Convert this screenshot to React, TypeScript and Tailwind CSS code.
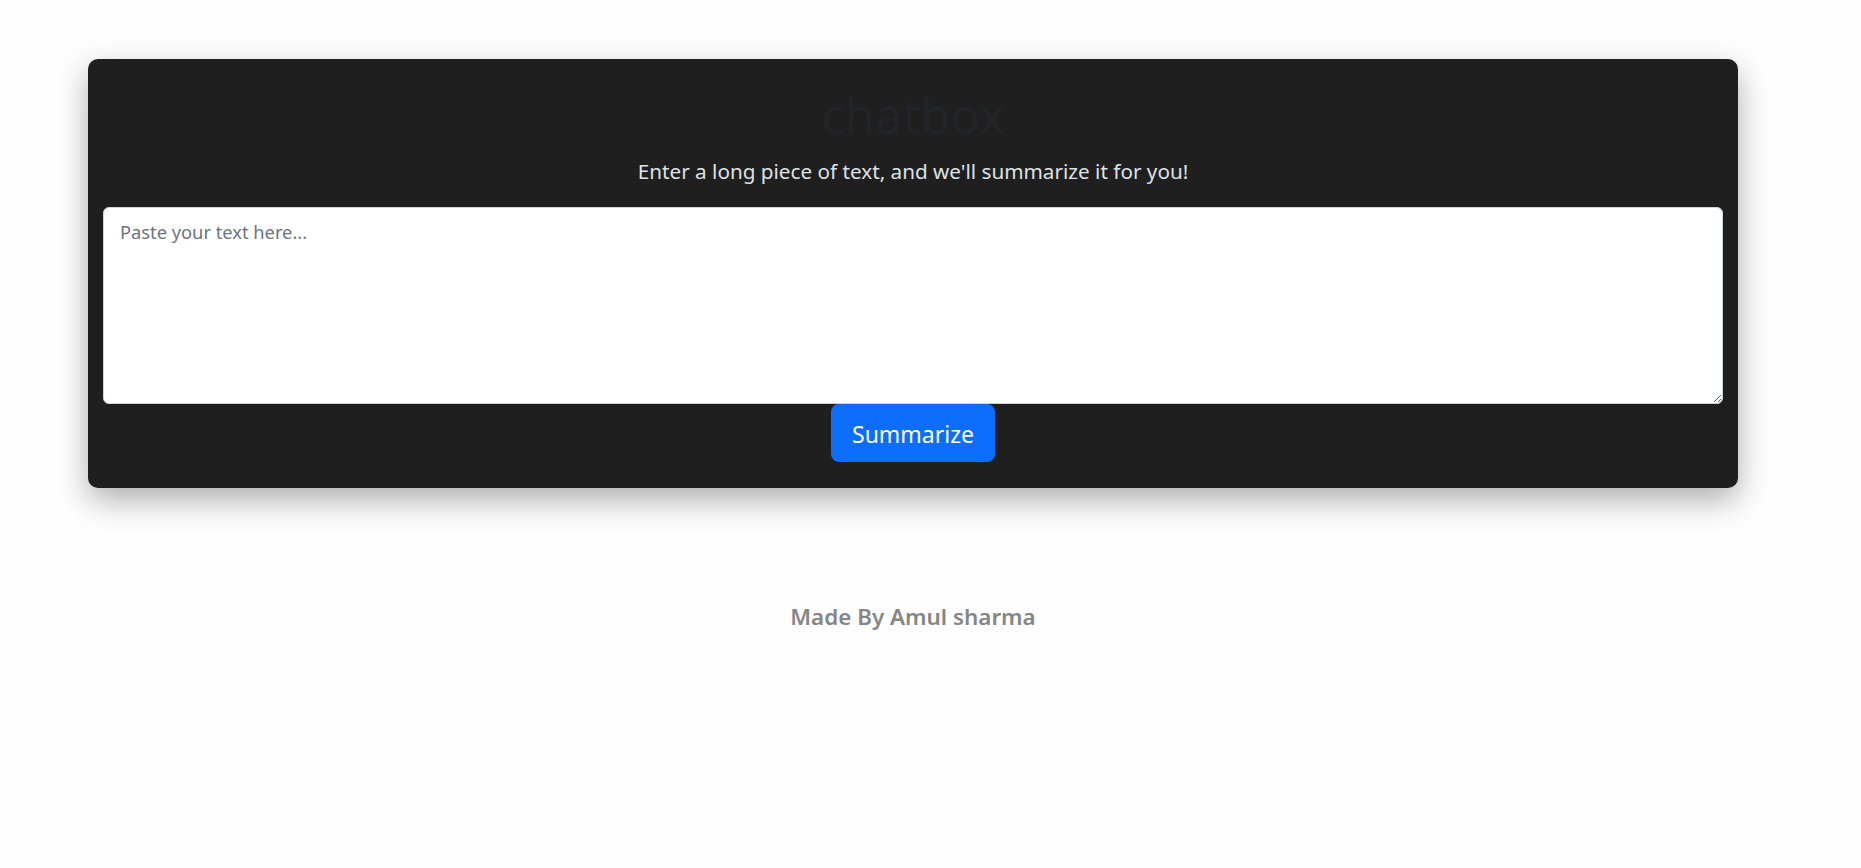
import { useState } from 'react'

const App = () => {
  const [text, setText] = useState('')

  return (
    <div className="min-h-[868px] w-full bg-[#fefefe]" style={{ fontFamily: '"Noto Sans", "Open Sans", sans-serif' }}>
      <div className="pt-[59px] pl-[88px]">
        <div className="w-[1650px] rounded-[10px] bg-[#1f1f1f] px-[15px] pb-[26px] pt-[20px] shadow-[0_12px_32px_rgba(0,0,0,0.32)] flex flex-col items-center">
          <h1 className="text-[49px] leading-[72px] font-normal text-[#212529]">chatbox</h1>
          <p className="mt-[5px] text-[20.7px] leading-[30px] text-[#dee2e6]">
            Enter a long piece of text, and we'll summarize it for you!
          </p>
          <textarea
            value={text}
            onChange={(e) => setText(e.target.value)}
            placeholder="Paste your text here..."
            className="mt-[21px] h-[197px] w-full rounded-[6px] border border-[#ced4da] bg-white px-[16px] py-[10px] text-[18.3px] leading-[28px] text-[#212529] placeholder:text-[#6c757d] outline-none"
          />
          <button className="h-[58px] rounded-[8px] bg-[#0d6efd] px-[21px] pt-[3px] text-[23px] text-white">
            Summarize
          </button>
        </div>
      </div>
      <div className="mt-[112px] pl-[88px]">
        <h3 className="w-[1650px] text-center text-[22.4px] font-semibold text-[#868686]">Made By Amul sharma</h3>
      </div>
    </div>
  )
}

export default App
